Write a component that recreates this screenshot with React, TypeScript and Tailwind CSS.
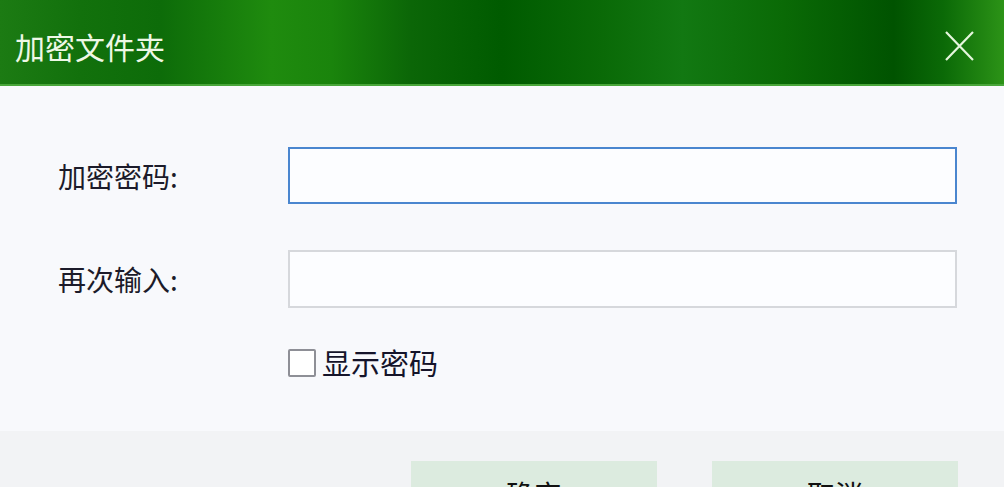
import React, { useState } from 'react';

const cjk = { fontFamily: '"Noto Sans CJK SC", "Noto Sans", sans-serif' };

export default function App() {
  const [show, setShow] = useState(false);

  return (
    <div className="w-[1004px] h-[487px] overflow-hidden bg-[#f8f9fc] flex flex-col" style={cjk}>
      {/* 标题栏 */}
      <div className="h-[84px] shrink-0 flex items-center justify-between pl-[15px] pr-[29px] pt-[7px] bg-[linear-gradient(90deg,#1c7b13_0%,#12710c_8%,#0d6c09_16%,#1f8b0e_27%,#1a840c_33%,#0b6607_41%,#005b00_50%,#0a6a07_60%,#127812_68%,#0a6a06_78%,#005300_89%,#0b6a07_94%,#2c9317_100%)]">
        <span className="text-[30px] leading-none text-[#eef8e6]">加密文件夹</span>
        <svg width="31" height="32" viewBox="0 0 31 32" className="text-[#e4f6dc]">
          <path d="M2 2 L29 30 M29 2 L2 30" stroke="currentColor" strokeWidth="2.2" fill="none" />
        </svg>
      </div>
      <div className="h-[2px] shrink-0 bg-[#49a63a]" />

      {/* 表单 */}
      <div className="flex-1 flex flex-col pt-[61px] pl-[58px] pr-[47px]">
        <div className="flex items-center h-[57px]">
          <label className="w-[230px] text-[28px] text-[#1c1b2a]">加密密码:</label>
          <input
            type={show ? 'text' : 'password'}
            className="flex-1 h-[57px] bg-[#fcfdff] border-2 border-[#4a86cf] outline-none px-3 text-[24px]"
          />
        </div>
        <div className="flex items-center h-[58px] mt-[46px]">
          <label className="w-[230px] text-[28px] text-[#1c1b2a]">再次输入:</label>
          <input
            type={show ? 'text' : 'password'}
            className="flex-1 h-[58px] bg-[#fcfdff] border-2 border-[#d6d8dc] outline-none px-3 text-[24px]"
          />
        </div>
        <div className="flex items-center mt-[33px] pl-[230px]">
          <button
            onClick={() => setShow(!show)}
            className="w-[28px] h-[28px] border-2 border-[#8e8f96] rounded-[2px] bg-white flex items-center justify-center"
          >
            {show && <span className="text-[18px] leading-none">✓</span>}
          </button>
          <span className="ml-[6px] text-[29px] text-[#15142a]">显示密码</span>
        </div>
      </div>

      {/* 底部按钮 */}
      <div className="h-[56px] shrink-0 bg-[#f2f3f5] flex items-start gap-[55px] pl-[411px] pt-[30px] overflow-hidden">
        <button className="w-[246px] h-[60px] bg-[#dcebdf] text-[28px] text-[#111] pt-[12px] flex justify-center items-start">确定</button>
        <button className="w-[246px] h-[60px] bg-[#dcebdf] text-[28px] text-[#111] pt-[12px] flex justify-center items-start">取消</button>
      </div>
    </div>
  );
}
